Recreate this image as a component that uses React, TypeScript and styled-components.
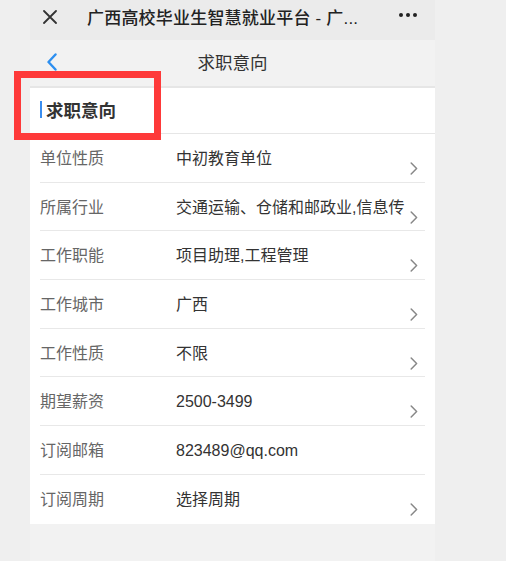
import React from "react";
import styled, { createGlobalStyle } from "styled-components";

const Global = createGlobalStyle`
  html, body { margin: 0; padding: 0; background: #efefef; }
  body { font-family: "Liberation Sans", "Noto Sans CJK SC", sans-serif; }
  * { box-sizing: border-box; }
`;

const Page = styled.div`
  position: relative;
  width: 506px;
  height: 561px;
  background: #efefef;
  overflow: hidden;
`;

const Phone = styled.div`
  margin-left: 30px;
  width: 405px;
  height: 561px;
  background: #f2f2f2;
  display: flex;
  flex-direction: column;
`;

const TopBar = styled.div`
  height: 40px;
  background: #ebebeb;
  display: flex;
  align-items: center;
  padding: 0 18px 0 13px;
`;

const CloseBtn = styled.div`
  width: 14px;
  height: 14px;
  display: flex;
  margin-top: -7px;
`;

const TopTitle = styled.div`
  margin-left: 30px;
  flex: 1;
  font-size: 17px;
  font-weight: 500;
  color: #222;
  white-space: nowrap;
  margin-top: -8px;
  letter-spacing: 0.2px;
`;

const Dots = styled.div`
  display: flex;
  gap: 3px;
  margin-top: -10px;
`;

const Dot = styled.span`
  width: 4px;
  height: 4px;
  border-radius: 50%;
  background: #222;
`;

const NavBar = styled.div`
  position: relative;
  height: 48px;
  display: flex;
  align-items: center;
  justify-content: center;
  background: #f2f2f2;
  border-bottom: 2px solid #e6e6e6;
`;

const BackBtn = styled.div`
  position: absolute;
  left: 16px;
  top: 13px;
  width: 12px;
  height: 18px;
  display: flex;
`;

const NavTitle = styled.div`
  font-size: 17.5px;
  color: #333;
  margin-top: -4px;
`;

const Section = styled.div`
  background: #fff;
  flex: none;
`;

const SectionHead = styled.div`
  height: 46px;
  display: flex;
  align-items: center;
  padding-left: 10px;
  padding-bottom: 3px;
  border-bottom: 1px solid #e6e6e6;
`;

const Bar = styled.span`
  width: 2px;
  height: 17px;
  background: #3a8ef0;
  margin-right: 4px;
`;

const HeadText = styled.div`
  font-size: 17.5px;
  font-weight: 700;
  color: #333;
`;

const List = styled.div`
  padding: 0 10px;
`;

const Row = styled.div<{ $last?: boolean }>`
  position: relative;
  height: 48.7px;
  display: flex;
  align-items: flex-start;
  padding-top: 14px;
  border-bottom: ${(p) => (p.$last ? "none" : "1px solid #e8e8e8")};
`;

const Label = styled.div`
  width: 136px;
  flex: none;
  font-size: 16px;
  line-height: 22px;
  color: #666;
`;

const Value = styled.div`
  font-size: 16px;
  line-height: 22px;
  color: #333;
  white-space: nowrap;
`;

const Arrow = styled.div`
  position: absolute;
  right: 7px;
  top: 28px;
  width: 8px;
  height: 13px;
  display: flex;
`;

const Highlight = styled.div`
  position: absolute;
  left: 14px;
  top: 71px;
  width: 147px;
  height: 69px;
  border: 7px solid #fe3939;
`;

const rows: { label: string; value: string; arrow: boolean }[] = [
  { label: "单位性质", value: "中初教育单位", arrow: true },
  { label: "所属行业", value: "交通运输、仓储和邮政业,信息传", arrow: true },
  { label: "工作职能", value: "项目助理,工程管理", arrow: true },
  { label: "工作城市", value: "广西", arrow: true },
  { label: "工作性质", value: "不限", arrow: true },
  { label: "期望薪资", value: "2500-3499", arrow: true },
  { label: "订阅邮箱", value: "823489@qq.com", arrow: false },
  { label: "订阅周期", value: "选择周期", arrow: true },
];

export default function App() {
  return (
    <Page>
      <Global />
      <Phone>
        <TopBar>
          <CloseBtn>
            <svg width="14" height="14" viewBox="0 0 14 14">
              <path d="M1 1 L13 13 M13 1 L1 13" stroke="#333" strokeWidth="1.8" strokeLinecap="round" />
            </svg>
          </CloseBtn>
          <TopTitle>广西高校毕业生智慧就业平台 - 广...</TopTitle>
          <Dots>
            <Dot />
            <Dot />
            <Dot />
          </Dots>
        </TopBar>
        <NavBar>
          <BackBtn>
            <svg width="12" height="18" viewBox="0 0 12 18">
              <path d="M9.5 1.5 L2.5 9 L9.5 16.5" fill="none" stroke="#2d8ff0" strokeWidth="2.4" strokeLinecap="round" strokeLinejoin="round" />
            </svg>
          </BackBtn>
          <NavTitle>求职意向</NavTitle>
        </NavBar>
        <Section>
          <SectionHead>
            <Bar />
            <HeadText>求职意向</HeadText>
          </SectionHead>
          <List>
            {rows.map((r, i) => (
              <Row key={r.label} $last={i === rows.length - 1}>
                <Label>{r.label}</Label>
                <Value>{r.value}</Value>
                {r.arrow && (
                  <Arrow>
                    <svg width="8" height="13" viewBox="0 0 8 13">
                      <path d="M1.2 1 L6.6 6.5 L1.2 12" fill="none" stroke="#888" strokeWidth="1.5" strokeLinecap="round" strokeLinejoin="round" />
                    </svg>
                  </Arrow>
                )}
              </Row>
            ))}
          </List>
        </Section>
      </Phone>
      <Highlight />
    </Page>
  );
}
